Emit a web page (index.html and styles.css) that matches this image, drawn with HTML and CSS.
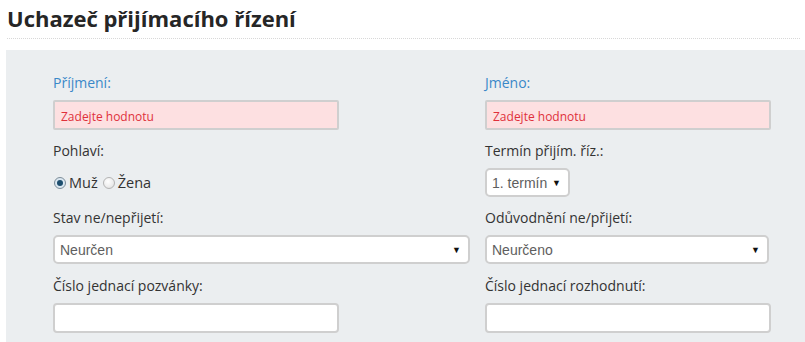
FILE: index.html
```html
<!DOCTYPE html>
<html lang="cs">
<head>
<meta charset="utf-8">
<title>Uchazeč přijímacího řízení</title>
<link rel="stylesheet" href="styles.css">
</head>
<body>
<header class="page-head">
  <h1 class="page-title">Uchazeč přijímacího řízení</h1>
</header>
<section class="panel">
  <div class="form-grid">
    <div class="field">
      <label class="label label-required">Příjmení:</label>
      <input class="text-input input-invalid" type="text" placeholder="Zadejte hodnotu">
    </div>
    <div class="field">
      <label class="label label-required">Jméno:</label>
      <input class="text-input input-invalid" type="text" placeholder="Zadejte hodnotu">
    </div>
    <div class="field">
      <label class="label">Pohlaví:</label>
      <div class="radio-row">
        <span class="radio radio-checked"></span><span class="radio-text">Muž</span>
        <span class="radio"></span><span class="radio-text">Žena</span>
      </div>
    </div>
    <div class="field">
      <label class="label">Termín přijím. říz.:</label>
      <div class="select select-small"><span class="select-value">1. termín</span><span class="select-arrow">▼</span></div>
    </div>
    <div class="field">
      <label class="label">Stav ne/nepřijetí:</label>
      <div class="select select-wide"><span class="select-value">Neurčen</span><span class="select-arrow">▼</span></div>
    </div>
    <div class="field">
      <label class="label">Odůvodnění ne/přijetí:</label>
      <div class="select select-mid"><span class="select-value">Neurčeno</span><span class="select-arrow">▼</span></div>
    </div>
    <div class="field field-last">
      <label class="label">Číslo jednací pozvánky:</label>
      <input class="text-input" type="text">
    </div>
    <div class="field field-last">
      <label class="label">Číslo jednací rozhodnutí:</label>
      <input class="text-input" type="text">
    </div>
  </div>
</section>
</body>
</html>
```
FILE: styles.css
```css
html, body {
  margin: 0;
  padding: 0;
  background: #ffffff;
  font-family: "Open Sans", "Noto Sans", sans-serif;
  color: #333333;
}

.page-head {
  margin: 0 5px 0 7px;
  padding-top: 3px;
  border-bottom: 1px dotted #d8d8d8;
  height: 39px;
  box-sizing: border-box;
}

.page-title {
  margin: 0;
  font-size: 22px;
  line-height: 31px;
  font-weight: 700;
  color: #262626;
}

.panel {
  margin: 11px 0 0 6px;
  background: #ebeef0;
  padding: 24px 0 20px 47px;
  min-height: 280px;
  box-sizing: border-box;
}

.form-grid {
  display: grid;
  grid-template-columns: 432px 300px;
  row-gap: 12px;
}

.field {
  display: flex;
  flex-direction: column;
  align-items: flex-start;
}

.field-last {
  padding-top: 1px;
}

.label {
  font-size: 14px;
  line-height: 18px;
  margin-bottom: 8px;
  color: #333333;
}

.label-required {
  color: #3a88c8;
}

.text-input {
  width: 286px;
  height: 30px;
  box-sizing: border-box;
  border: 2px solid #cfcfcf;
  border-radius: 4px;
  background: #ffffff;
  padding: 0 6px;
  font-family: "Open Sans", sans-serif;
  font-size: 12px;
  outline: none;
}

.input-invalid {
  background: #fde0e1;
  border-radius: 2px;
  padding-top: 2px;
}

.input-invalid::placeholder {
  color: #e0303b;
  opacity: 1;
}

.radio-row {
  display: flex;
  align-items: center;
  height: 29px;
  font-size: 14.5px;
}

.radio {
  width: 10px;
  height: 10px;
  border-radius: 50%;
  border: 1px solid #b4b4b4;
  background: radial-gradient(circle at 40% 35%, #ffffff 0%, #ececec 60%, #d6d6d6 100%);
  position: relative;
  margin-left: 1px;
  margin-right: 3px;
}

.radio-checked {
  border-color: #7d8d99;
  background: #dbe8f2;
}

.radio-checked::after {
  content: "";
  position: absolute;
  left: 2px;
  top: 2px;
  width: 6px;
  height: 6px;
  border-radius: 50%;
  background: #1d4e6e;
}

.radio-text {
  margin-right: 4px;
  color: #333333;
}

.select {
  height: 29px;
  box-sizing: border-box;
  border: 2px solid #cfcfcf;
  border-radius: 5px;
  background: #ffffff;
  display: flex;
  align-items: center;
  justify-content: space-between;
  padding: 0 7px 0 5px;
  font-family: "Liberation Sans", Arial, sans-serif;
  font-size: 14px;
  color: #5e5e5e;
}

.select-small {
  width: 85px;
}

.select-wide {
  width: 417px;
}

.select-mid {
  width: 284px;
}

.select-arrow {
  font-size: 9px;
  color: #111111;
}
```
